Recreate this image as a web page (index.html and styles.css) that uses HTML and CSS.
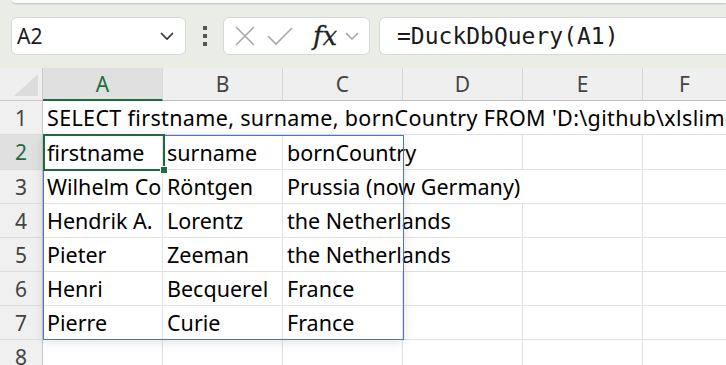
FILE: index.html
```html
<!DOCTYPE html>
<html>
<head>
<meta charset="utf-8">
<link rel="stylesheet" href="styles.css">
</head>
<body>
<div class="app">
  <div class="toolbar">
    <div class="ribbon-edge"></div>
    <div class="formula-row">
      <div class="namebox">
        <span class="name">A2</span>
        <svg class="chev" width="16" height="10" viewBox="0 0 16 10"><path d="M2 2 L8 8 L14 2" fill="none" stroke="#333" stroke-width="1.6"/></svg>
      </div>
      <div class="dots"><i></i><i></i><i></i></div>
      <div class="fxbox">
        <svg width="22" height="22" viewBox="0 0 22 22"><path d="M2 2 L20 20 M20 2 L2 20" stroke="#a8a8a8" stroke-width="1.6" fill="none"/></svg>
        <svg width="28" height="22" viewBox="0 0 28 22"><path d="M2 11 L10 19 L26 3" stroke="#a8a8a8" stroke-width="1.6" fill="none"/></svg>
        <span class="fx">fx</span>
        <svg width="16" height="10" viewBox="0 0 16 10"><path d="M2 2 L8 8 L14 2" fill="none" stroke="#9a9a9a" stroke-width="1.4"/></svg>
      </div>
      <div class="formula">=DuckDbQuery(A1)</div>
    </div>
  </div>
  <div class="sheet">
    <div class="corner"><div class="tri"></div></div>
    <div class="colh sel">A</div>
    <div class="colh">B</div>
    <div class="colh">C</div>
    <div class="colh">D</div>
    <div class="colh">E</div>
    <div class="colh last">F</div>

    <div class="rowh">1</div>
    <div class="cell span6">SELECT firstname, surname, bornCountry FROM 'D:\github\xlslim-docs\nobel.csv'</div>

    <div class="rowh selr">2</div>
    <div class="cell">firstname</div>
    <div class="cell">surname</div>
    <div class="cell span2">bornCountry</div>
    <div class="cell"></div>
    <div class="cell last"></div>

    <div class="rowh">3</div>
    <div class="cell">Wilhelm Conrad</div>
    <div class="cell">Röntgen</div>
    <div class="cell span3">Prussia (now Germany)</div>
    <div class="cell last"></div>

    <div class="rowh">4</div>
    <div class="cell">Hendrik A.</div>
    <div class="cell">Lorentz</div>
    <div class="cell span2">the Netherlands</div>
    <div class="cell"></div>
    <div class="cell last"></div>

    <div class="rowh">5</div>
    <div class="cell">Pieter</div>
    <div class="cell">Zeeman</div>
    <div class="cell span2">the Netherlands</div>
    <div class="cell"></div>
    <div class="cell last"></div>

    <div class="rowh">6</div>
    <div class="cell">Henri</div>
    <div class="cell">Becquerel</div>
    <div class="cell">France</div>
    <div class="cell"></div>
    <div class="cell"></div>
    <div class="cell last"></div>

    <div class="rowh">7</div>
    <div class="cell">Pierre</div>
    <div class="cell">Curie</div>
    <div class="cell">France</div>
    <div class="cell"></div>
    <div class="cell"></div>
    <div class="cell last"></div>

    <div class="rowh">8</div>
    <div class="cell"></div>
    <div class="cell"></div>
    <div class="cell"></div>
    <div class="cell"></div>
    <div class="cell"></div>
    <div class="cell last"></div>

    <div class="spill"></div>
    <div class="active"><span class="handle"></span></div>
  </div>
</div>
</body>
</html>
```

FILE: styles.css
```css
* { box-sizing: border-box; }
html, body { margin: 0; padding: 0; }
body {
  width: 726px;
  height: 365px;
  overflow: hidden;
  background: #ffffff;
  font-family: "Noto Sans", "Open Sans", sans-serif;
  color: #111;
}
.app { width: 726px; }
.toolbar {
  background: #e9ede6;
  height: 68px;
  overflow: hidden;
}
.ribbon-edge {
  margin-left: 12px;
  height: 3px;
  background: #fafbf9;
  border-bottom-left-radius: 6px;
  box-shadow: 0 1px 2px rgba(0,0,0,0.18);
}
.formula-row {
  display: flex;
  align-items: center;
  margin-top: 14px;
  padding-left: 11px;
  height: 38px;
}
.namebox {
  width: 175px;
  height: 38px;
  background: #fff;
  border: 1px solid #d6d9d3;
  border-radius: 6px;
  display: flex;
  align-items: center;
  justify-content: space-between;
  padding: 0 10px 0 5px;
}
.name { font-size: 21px; color: #1a1a1a; }
.dots {
  width: 37px;
  display: flex;
  flex-direction: column;
  align-items: center;
  gap: 4px;
}
.dots i { display: block; width: 4px; height: 4px; background: #555; }
.fxbox {
  width: 147px;
  height: 38px;
  background: #fff;
  border: 1px solid #d6d9d3;
  border-radius: 6px;
  display: flex;
  align-items: center;
  padding: 0 4px 0 10px;
  gap: 10px;
}
.fx {
  font-family: "DejaVu Serif", "Liberation Serif", serif;
  font-style: italic;
  font-size: 26px;
  color: #1f1f1f;
  margin-left: 9px;
  margin-right: -3px;
  line-height: 1;
  -webkit-text-stroke: 0.3px #1f1f1f;
}
.formula {
  margin-left: 9px;
  flex: 1;
  height: 38px;
  background: #fff;
  border: 1px solid #d6d9d3;
  border-right: none;
  border-radius: 6px 0 0 6px;
  font-family: "DejaVu Sans Mono", "Liberation Mono", monospace;
  font-size: 23px;
  color: #1a1a1a;
  display: flex;
  align-items: center;
  padding-left: 17px;
  white-space: nowrap;
}

.sheet {
  position: relative;
  display: grid;
  grid-template-columns: 43px 120px 120px 120px 120px 120px 1fr;
  grid-template-rows: 33px 34px 35px 34px 34px 34px 34px 34px 34px;
  background: #fff;
}
.corner {
  background: #efefef;
  border-right: 1px solid #c8c8c8;
  border-bottom: 1px solid #c8c8c8;
  position: relative;
}
.tri {
  position: absolute;
  right: 4px;
  bottom: 4px;
  width: 0;
  height: 0;
  border-left: 24px solid transparent;
  border-bottom: 22px solid #dcdcdc;
}
.colh {
  background: #efefef;
  border-right: 1px solid #d6d6d6;
  border-bottom: 1px solid #bdbdbd;
  display: flex;
  align-items: center;
  justify-content: center;
  font-size: 21px;
  color: #444;
}
.colh.sel {
  background: #e0e0e0;
  color: #1e6b41;
  border-bottom: 2px solid #1e6b41;
}
.colh.last { border-right: none; }
.rowh {
  background: #f0f0f0;
  border-right: 1px solid #c8c8c8;
  border-bottom: 1px solid #dcdcdc;
  display: flex;
  align-items: center;
  justify-content: center;
  font-size: 21px;
  color: #444;
}
.rowh.selr { background: #e0e0e0; color: #1e6b41; }
.cell {
  border-right: 1px solid #e1e1e1;
  border-bottom: 1px solid #e1e1e1;
  font-size: 21.5px;
  color: #000;
  white-space: nowrap;
  overflow: hidden;
  padding-left: 4px;
  display: flex;
  align-items: center;
}
.cell.last { border-right: none; }
.span2 { grid-column: span 2; }
.span3 { grid-column: span 3; }
.span6 { grid-column: span 6; border-right: none; letter-spacing: 0.35px; }
.spill {
  position: absolute;
  left: 43px;
  top: 67px;
  width: 361px;
  height: 205px;
  border: 1px solid #4a74c4;
  box-shadow: 0 2px 10px rgba(0,0,0,0.12);
  pointer-events: none;
}
.active {
  position: absolute;
  left: 43px;
  top: 66px;
  width: 122px;
  height: 37px;
  border: 2px solid #1e6b41;
}
.handle {
  position: absolute;
  right: -5px;
  bottom: -5px;
  width: 8px;
  height: 8px;
  background: #1e6b41;
  border: 1px solid #fff;
}
```
